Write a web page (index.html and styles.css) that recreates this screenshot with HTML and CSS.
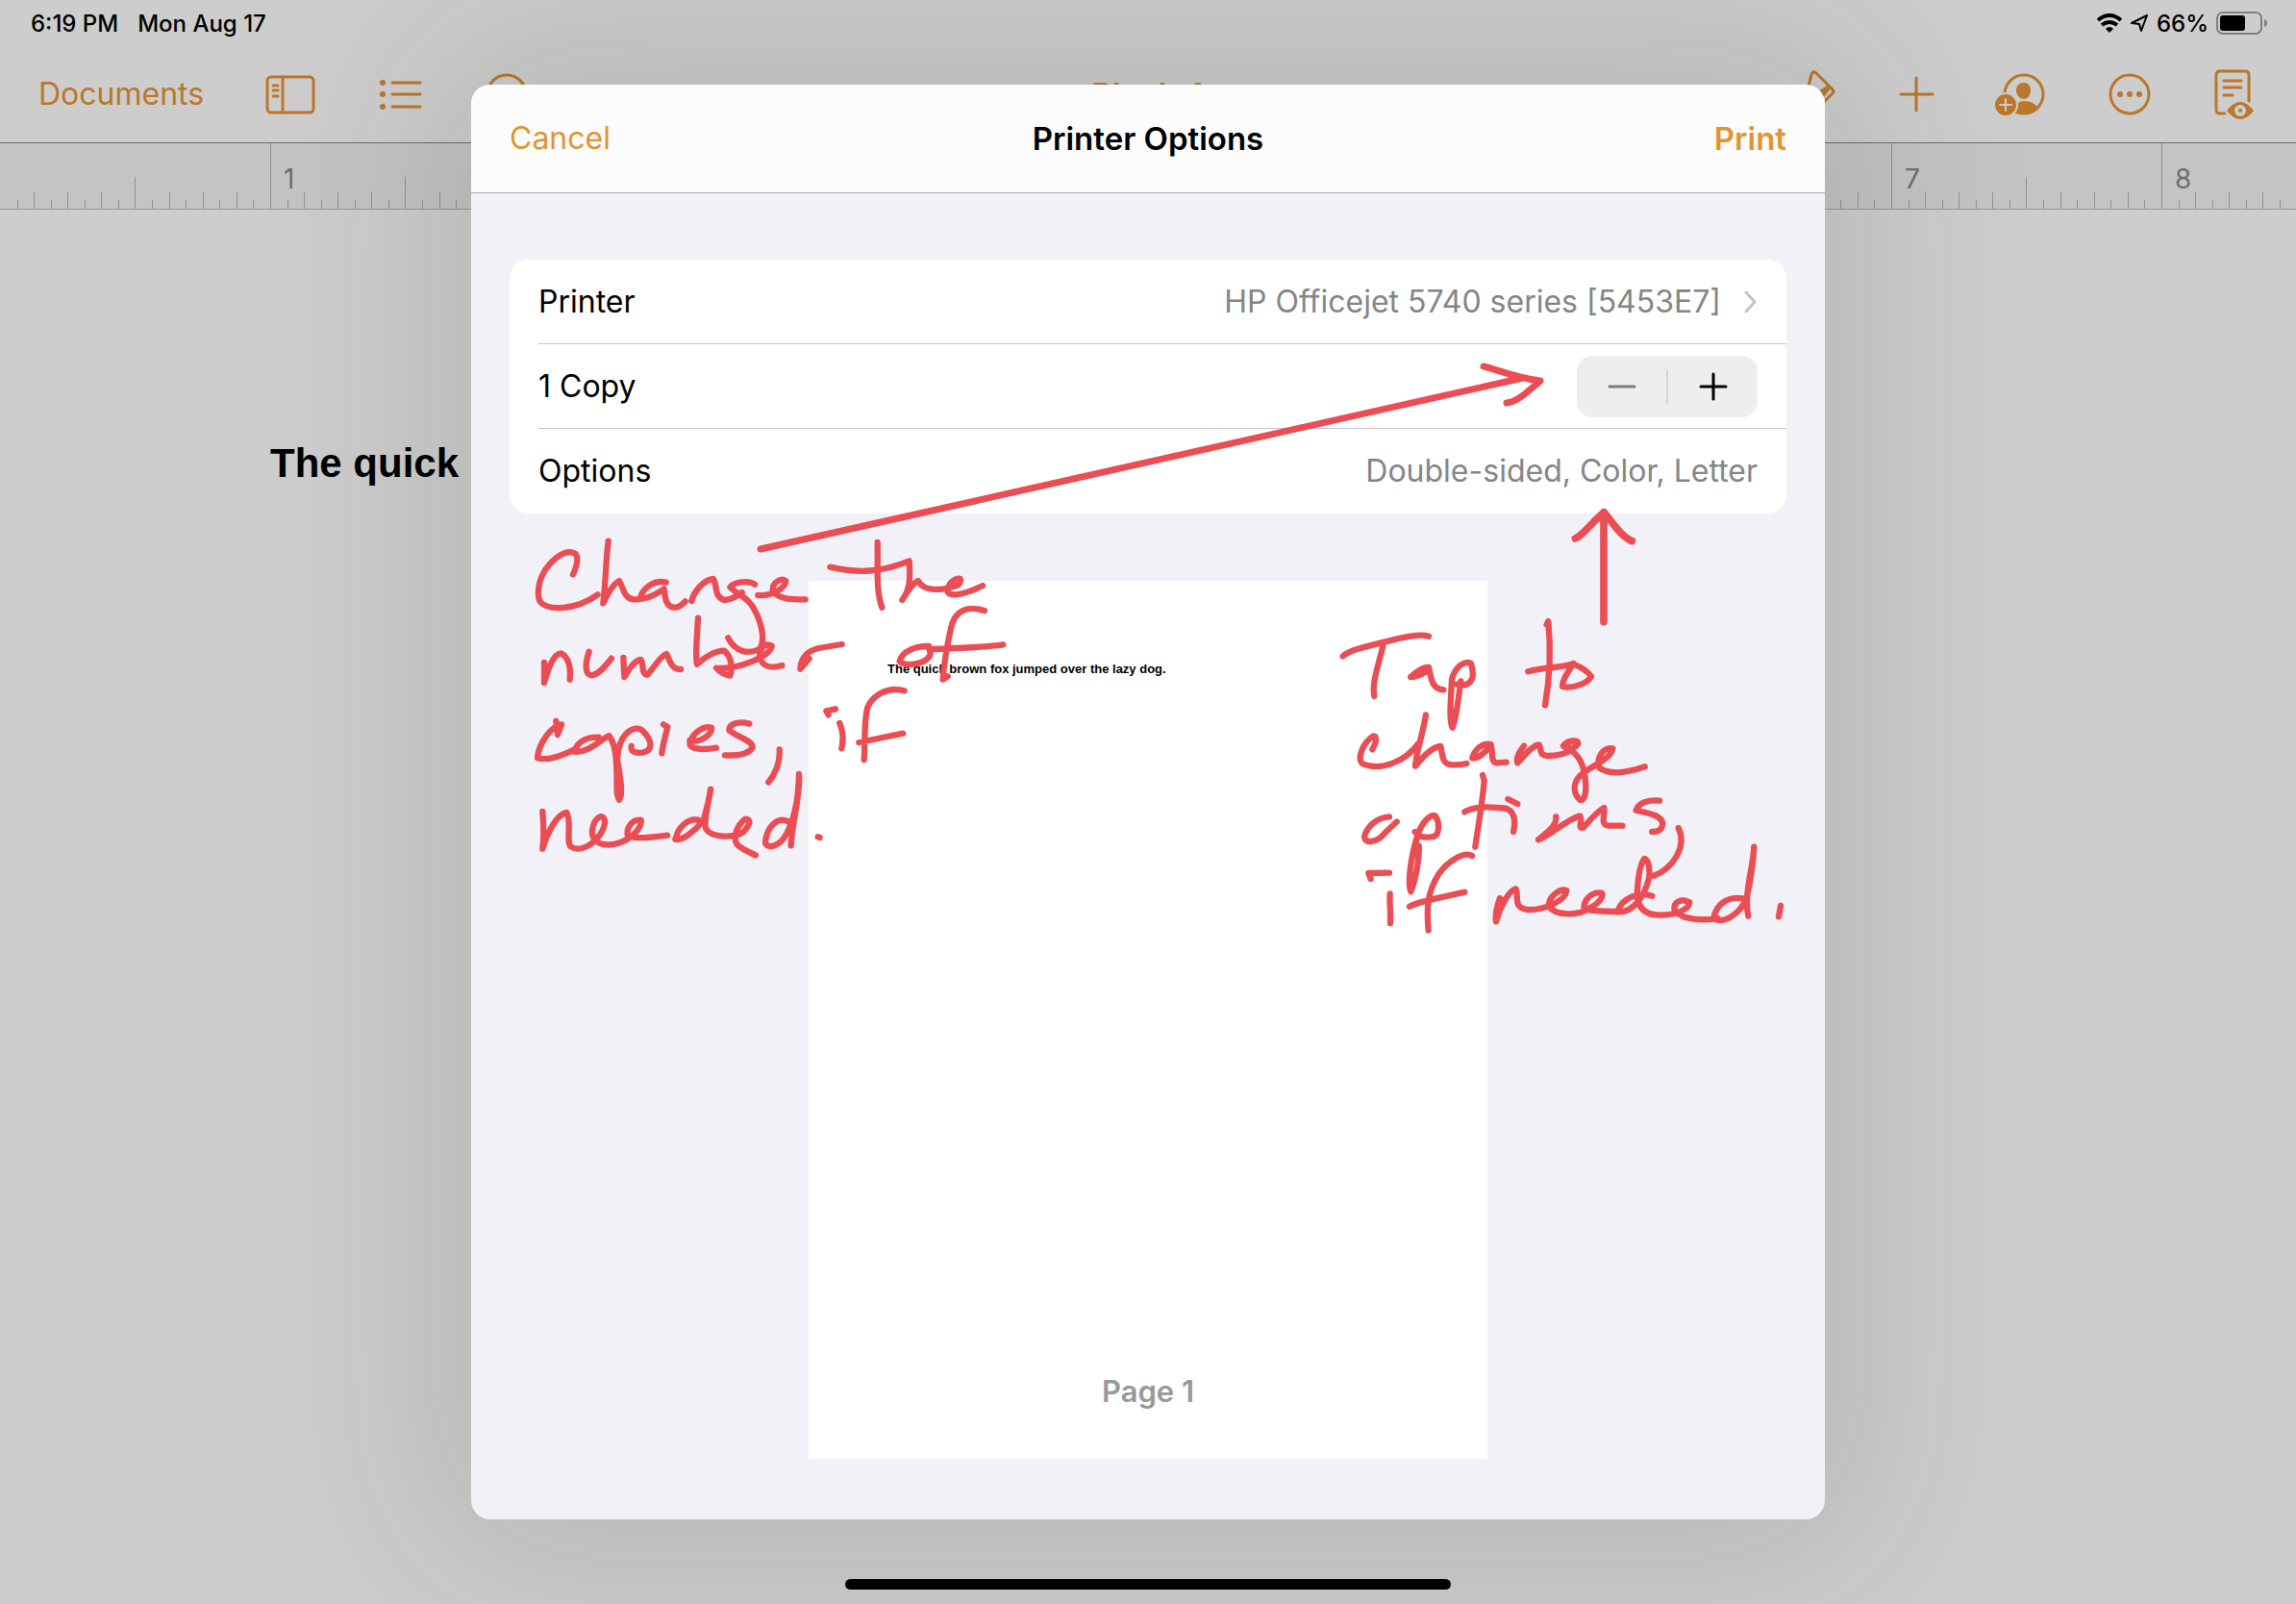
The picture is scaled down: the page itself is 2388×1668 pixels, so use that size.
FILE: index.html
```html
<!DOCTYPE html>
<html lang="en">
<head>
<meta charset="utf-8">
<meta name="viewport" content="width=device-width, initial-scale=1">
<title>Printer Options</title>
<link rel="stylesheet" href="styles.css">
</head>
<body>
<div class="screen">
  <header class="status">
    <div class="status-group status-left"><span>6:19 PM</span><span>Mon Aug 17</span></div>
    <div class="status-group">
      <svg class="wifi" viewBox="2182 14 28 20" aria-hidden="true"><path class="ink-line" d="M2184 21Q2196 11 2208 21M2188 26Q2196 20 2204 26"/><path class="ink" d="M2196 34l-4-4q4-4 8 0z"/></svg>
      <svg class="locate" viewBox="2219 15 19 20" aria-hidden="true"><path d="M2236 17L2220 25L2228 26L2230 33Z"/></svg>
      <span class="charge">66%</span>
      <svg class="battery" viewBox="2305 12 54 24" aria-hidden="true"><rect class="battery-case" x="2306" y="13" width="46" height="22" rx="6"/><rect class="ink" x="2309" y="16" width="26" height="16" rx="3"/><path class="battery-tip" d="M2355 20q3 1 3 4t-3 4z"/></svg>
    </div>
  </header>

  <nav class="toolbar" aria-label="Document">
    <div class="tools tools-left">
      <button class="text-button documents" type="button">Documents</button>
      <button class="icon-button" type="button" aria-label="View options">
        <svg class="icon" viewBox="277 73 50 50"><rect x="278" y="80" width="48" height="37" rx="4"/><path d="M294 80v37M284 89h5M284 94h5M284 100h5"/></svg>
      </button>
      <button class="icon-button" type="button" aria-label="Lists">
        <svg class="icon" viewBox="391 73 50 50"><path d="M408 86h29M408 98h29M408 111h29"/><g class="solid"><circle cx="398" cy="86" r="3"/><circle cx="398" cy="98" r="3"/><circle cx="398" cy="111" r="3"/></g></svg>
      </button>
      <button class="icon-button" type="button" aria-label="Undo">
        <svg class="icon icon-narrow" viewBox="505 73 44 50"><circle cx="527" cy="98" r="20"/><path d="M524 89l-7 7 7 7M517 96h13q7 0 7 7t-7 7h-5"/></svg>
      </button>
    </div>
    <h1 class="doc-title">Blank 4</h1>
    <div class="tools tools-right">
      <button class="icon-button" type="button" aria-label="Format">
        <svg class="icon" viewBox="1859 73 50 50"><path d="M1881 89l3-11q1-5 5-2l17 17q2 2 0 4l-11 11M1903 91l-9 11"/><path class="solid" d="M1902 88l-11 7 4 7 3-6z"/></svg>
      </button>
      <button class="icon-button" type="button" aria-label="Insert">
        <svg class="icon" viewBox="1969 73 50 50"><path d="M1977 98h33M1993 81v34"/></svg>
      </button>
      <button class="icon-button" type="button" aria-label="Collaborate">
        <svg class="icon" viewBox="2079 73 50 50"><circle cx="2105" cy="98" r="20"/><path class="solid" d="M2105 86c-5 0-8 3-8 8s4 9 8 9 7-4 7-9-3-8-7-8zM2094 114q4-9 11-9 9 0 14 6-9 12-25 6z"/><circle class="badge" cx="2086" cy="109" r="12"/><path class="cutout" d="M2080 109h12M2086 103v12"/></svg>
      </button>
      <button class="icon-button" type="button" aria-label="More">
        <svg class="icon" viewBox="2189 73 50 50"><circle cx="2215" cy="98" r="20"/><g class="solid"><circle cx="2205" cy="98" r="3"/><circle cx="2215" cy="98" r="3"/><circle cx="2225" cy="98" r="3"/></g></svg>
      </button>
      <button class="icon-button" type="button" aria-label="Reading view">
        <svg class="icon" viewBox="2299 73 50 50"><path d="M2339 105V78q0-4-4-4h-26q-4 0-4 4v36q0 4 4 4h5M2313 84h18M2313 91h18M2313 99h9"/><path class="solid" d="M2316 115q14-18 28 0-14 18-28 0z"/><circle class="cutout-fill" cx="2330" cy="115" r="6"/><circle class="solid" cx="2330" cy="115" r="2"/></svg>
      </button>
    </div>
  </nav>

  <div class="ruler" aria-hidden="true">
    <svg class="ticks">
      <defs><pattern id="inch" width="281" height="68" patternUnits="userSpaceOnUse"><path d="M0 0h1v68h-1zM18 59h1v9h-1zM35 51h1v17h-1zM53 59h1v9h-1zM70 51h1v17h-1zM88 59h1v9h-1zM105 51h1v17h-1zM123 59h1v9h-1zM140 35h1v33h-1zM158 59h1v9h-1zM176 51h1v17h-1zM193 59h1v9h-1zM211 51h1v17h-1zM228 59h1v9h-1zM246 51h1v17h-1zM263 59h1v9h-1z"/></pattern></defs>
      <rect x="1" width="100%" height="68" fill="url(#inch)"/>
    </svg>
    <div class="ruler-numbers"><span></span><span>1</span><span></span><span></span><span></span><span></span><span></span><span>7</span><span>8</span></div>
  </div>

  <main class="document"><p class="headline">The quick</p></main>

  <div class="overlay">
    <section class="dialog" role="dialog" aria-labelledby="dialog-title">
      <header class="dialog-bar">
        <button class="text-button" type="button">Cancel</button>
        <h2 class="dialog-title" id="dialog-title">Printer Options</h2>
        <button class="text-button confirm" type="button">Print</button>
      </header>
      <div class="dialog-body">
        <div class="settings">
          <button class="row" type="button">
            <span>Printer</span>
            <span class="value">HP Officejet 5740 series [5453E7]<svg class="chevron" viewBox="0 0 14 26" aria-hidden="true"><path d="M2 3l9 10-9 10"/></svg></span>
          </button>
          <div class="row">
            <span>1 Copy</span>
            <div class="stepper" role="group" aria-label="Copies">
              <button class="step" type="button" aria-label="Fewer copies" disabled><svg class="step-icon" viewBox="0 0 30 30"><path d="M2 15h26"/></svg></button>
              <button class="step" type="button" aria-label="More copies"><svg class="step-icon" viewBox="0 0 30 30"><path d="M2 15h26M15 2v26"/></svg></button>
            </div>
          </div>
          <button class="row" type="button">
            <span>Options</span>
            <span class="value">Double-sided, Color, Letter</span>
          </button>
        </div>
        <div class="sheet">
          <p class="sheet-text">The quick brown fox jumped over the lazy dog.</p>
          <p class="sheet-label">Page 1</p>
        </div>
      </div>

      <svg class="notes" viewBox="490 88 1408 1492" role="img" aria-label="Change the number of copies, if needed. Tap to change options, if needed.">
        <g class="arrow-pen"><path d="M791 571L1584 393M1543 381C1556 384 1577 393 1602 396C1588 408 1578 418 1567 419"/></g>
        <g class="pen" transform="translate(540 540) scale(.33333)">
          <path d="M168 172C182 140 186 118 175 107C150 92 110 115 80 160C58 195 55 240 66 258C90 285 175 285 245 235"/>
          <path d="M278 68C270 130 270 200 262 262C275 235 295 200 312 192C325 210 325 250 360 250C400 250 425 235 452 217C455 250 460 275 485 275C500 275 510 265 518 256M458 197C420 188 385 215 378 245"/>
          <path d="M538 255C545 225 575 190 605 186C620 205 605 240 640 252C665 250 680 240 695 228M735 203C715 190 670 195 658 212C680 235 720 245 738 290C758 330 768 380 750 405C715 422 675 415 652 370"/>
          <path d="M745 237C790 240 830 215 832 192C810 180 785 205 793 225C810 250 850 250 893 250"/>
          <path d="M970 149C1060 170 1130 165 1217 130C1220 180 1222 215 1195 252C1215 220 1235 195 1245 192C1260 225 1320 225 1370 205C1390 180 1365 178 1345 200C1330 225 1335 235 1360 235C1395 232 1420 220 1446 207M1118 72C1120 150 1112 220 1132 275"/>
          <path d="M78 447L78 510C90 470 105 420 130 418C155 430 162 465 158 500M218 413C205 450 205 485 225 487C250 485 275 450 288 434M325 432L328 492C345 465 360 440 380 438C390 455 380 485 400 485C420 465 440 425 460 420C470 440 475 470 504 468"/>
          <path d="M558 308C555 370 548 430 555 452C580 430 610 410 640 410C665 430 665 470 658 488C640 485 625 475 615 464C690 470 785 425 788 395C765 380 745 410 752 435C765 465 790 465 820 456M905 435L877 467C880 430 900 410 935 402L1007 390"/>
          <path d="M1278 396C1240 395 1195 410 1187 443C1200 460 1265 455 1282 425C1285 405 1275 398 1270 396M1452 285C1400 270 1360 280 1347 340C1335 395 1325 450 1322 500L1337 490M1290 405C1360 402 1450 400 1510 391"/>
          <path d="M115 630L120 672L132 640C100 645 60 700 57 745C90 755 140 735 180 715M248 680C210 678 180 695 172 725C215 730 250 690 280 675C300 700 303 740 304 780C306 840 302 860 312 875C325 860 315 800 306 750C310 660 365 640 385 660C415 690 420 720 385 728C360 730 348 725 350 708M312 800L312 870"/>
          <path d="M450 640L463 648C455 680 448 705 445 730M532 690C570 700 605 665 600 650C570 640 530 680 533 705C545 720 585 718 615 713M718 638C690 630 655 635 655 658C680 680 730 690 728 712C715 735 680 738 642 736M812 718C815 755 800 795 778 820"/>
          <path d="M987 592L958 598L965 610M1000 636C1010 660 1012 690 1006 715M1202 535C1150 520 1100 550 1086 590C1075 640 1080 700 1076 750M1060 696L1198 668"/>
          <path d="M73 912C76 950 78 990 73 1028C85 985 115 920 148 915C165 940 145 1010 162 1022C200 1045 260 995 268 945C265 915 235 925 228 970C225 1015 270 1022 310 1010C345 1000 385 965 380 938C350 935 335 965 338 985C360 1000 410 992 462 986"/>
          <path d="M570 945C545 925 500 945 487 998C510 1005 550 970 575 940C585 900 595 870 597 842C590 890 575 940 582 965C600 995 670 995 700 975C722 950 725 935 705 935C680 955 665 990 680 1015C695 1030 720 1040 738 1048M838 942C800 925 770 970 768 1010C775 1030 815 1020 835 980C860 930 872 870 873 795C878 860 852 940 848 1018M932 991L938 993"/>
        </g>
        <g class="pen" transform="translate(1380 510) scale(.33333)">
          <path class="heavy" d="M864 410L864 68M775 150C800 140 830 95 865 68C890 100 920 145 952 158"/>
          <path d="M50 517C70 500 110 490 170 475C230 460 290 445 318 455M175 485C160 550 140 600 148 642M262 582C285 560 305 550 318 552C325 580 325 620 364 622M262 582C285 582 310 565 320 560M418 595C410 650 405 710 392 740C380 720 388 640 390 590C400 550 430 530 450 540C462 580 455 600 430 607L405 605"/>
          <path d="M686 418L691 408C700 500 695 590 681 670M628 565C680 550 730 555 770 540C750 570 735 590 735 612C770 620 815 600 825 580C810 560 790 550 770 542"/>
          <path d="M142 808C158 780 155 765 145 766C110 790 95 835 110 852C170 880 250 840 285 790M309 700C300 760 280 810 276 860C300 830 330 800 355 798C362 830 360 855 390 856C410 857 425 855 436 852M512 792C485 785 460 810 454 835C475 838 495 815 512 795C520 820 510 848 530 850L560 848M615 797C600 815 590 835 595 850C615 830 640 795 662 793C672 810 660 825 690 828C720 828 750 818 765 810"/>
          <path d="M738 797C750 780 785 775 784 790C775 808 745 805 738 797C790 820 805 860 808 920C810 960 795 970 790 965C765 945 770 910 790 890C830 855 885 840 892 805C865 800 840 830 850 865C885 890 940 880 992 862"/>
          <path d="M195 1018C155 1020 125 1050 117 1080C120 1105 150 1095 165 1085C185 1065 205 1045 218 1034M287 1108C290 1150 275 1220 262 1252C250 1220 265 1130 285 1070C300 1030 325 1010 338 1015C355 1040 350 1080 330 1080C305 1085 285 1080 275 1065M486 888L491 905C485 980 470 1060 463 1112M430 1003C470 980 530 990 560 992C590 1005 588 1040 582 1065M565 963L595 978"/>
          <path d="M715 1018C718 1050 680 1070 660 1090C700 1075 750 1025 790 1015C800 1035 780 1055 800 1052C820 1030 845 1000 865 990C870 1010 850 1045 880 1046L922 1046M1038 968C1010 965 975 970 965 998C990 1005 1045 1010 1048 1040C1045 1060 1035 1065 1015 1065M1097 1053C1125 1110 1080 1180 1020 1202"/>
          <path d="M195 1193L130 1194L137 1212M197 1258C195 1290 200 1320 198 1350M453 1140C430 1125 380 1155 350 1195C315 1250 310 1300 317 1372M258 1298C290 1280 360 1270 430 1253"/>
          <path d="M540 1272C530 1300 525 1325 528 1345C540 1300 570 1245 590 1243C600 1270 580 1300 625 1308C680 1310 745 1280 748 1248C725 1240 690 1270 693 1298C715 1330 790 1325 815 1305C850 1290 865 1265 858 1256C825 1250 800 1280 803 1305C830 1315 880 1312 912 1315C955 1315 990 1270 1005 1210C1012 1160 992 1145 990 1150C975 1170 970 1220 968 1260C970 1300 990 1325 1040 1325C1085 1325 1130 1310 1132 1285C1105 1270 1080 1285 1085 1310C1110 1345 1190 1340 1220 1335M1015 1265C970 1250 920 1275 908 1312M1298 1273C1250 1265 1215 1290 1207 1335C1240 1355 1290 1320 1310 1270C1325 1210 1330 1160 1333 1112C1330 1180 1300 1260 1315 1328M1416 1295L1410 1330"/>
        </g>
      </svg>
    </section>
  </div>
  <div class="home-indicator"></div>
</div>
</body>
</html>
```

FILE: styles.css
```css
:root {
  --tint: #e29430;
  --tint-dim: #bb772a;
  --backdrop: #cdcdcd;
}
* { box-sizing: border-box; }
body {
  margin: 0;
  background: var(--backdrop);
  color: #000;
  font-family: Inter, "Noto Sans", sans-serif;
}
h1, h2, p { margin: 0; }
button {
  border: 0;
  padding: 0;
  background: none;
  color: inherit;
  font: inherit;
}
svg { display: block; }

.screen {
  position: relative;
  display: flex;
  flex-direction: column;
  min-height: 100vh;
  overflow: hidden;
}

/* Status bar */
.status {
  display: flex;
  justify-content: space-between;
  align-items: center;
  height: 48px;
  padding: 0 29px 0 32px;
  font-size: 24px;
  font-weight: 500;
}
.status-group { display: flex; align-items: center; gap: 8px; }
.status-left { gap: 20px; }
.wifi { width: 28px; height: 20px; }
.locate { width: 19px; height: 20px; fill: none; stroke: #000; stroke-width: 2; stroke-linejoin: round; }
.battery { width: 54px; height: 24px; }
.ink { fill: #000; }
.ink-line { fill: none; stroke: #000; stroke-width: 4; }
.battery-case { fill: none; stroke: #808080; stroke-width: 2; }
.battery-tip { fill: #808080; }

/* Toolbar */
.toolbar {
  display: grid;
  grid-template-columns: 1fr auto 1fr;
  align-items: center;
  height: 101px;
  padding: 0 39px 0 40px;
  border-bottom: 1px solid #6b6b6b;
  color: var(--tint-dim);
}
.tools { display: flex; align-items: center; }
.tools-left { gap: 64px; }
.tools-right { gap: 60px; justify-content: flex-end; }
.text-button { font-size: 32px; line-height: 40px; }
.documents { width: 173px; text-align: left; white-space: nowrap; }
.doc-title { font-size: 33px; line-height: 40px; font-weight: 600; }
.icon {
  width: 50px;
  height: 50px;
  overflow: visible;
  fill: none;
  stroke: currentColor;
  stroke-width: 3;
  stroke-linecap: round;
  stroke-linejoin: round;
}
.icon-narrow { width: 44px; }
.icon .solid { fill: currentColor; stroke: none; }
.icon .badge { fill: currentColor; stroke: var(--backdrop); stroke-width: 2; }
.icon .cutout { stroke: var(--backdrop); stroke-width: 2; }
.icon .cutout-fill { fill: var(--backdrop); stroke: none; }

/* Ruler */
.ruler {
  display: grid;
  height: 69px;
  overflow: hidden;
  background: #c4c4c4;
  border-bottom: 1px solid #999;
}
.ticks, .ruler-numbers { grid-area: 1 / 1; }
.ticks { width: 100%; height: 68px; fill: #929292; }
.ruler-numbers { display: flex; color: #6e6e6e; font-size: 28px; line-height: 34px; padding-top: 20px; }
.ruler-numbers span { flex: 0 0 281px; padding-left: 14px; }

/* Document */
.document { flex: 1; padding: 240px 281px 0; }
.headline { font: bold 42px/48px "Liberation Sans", Arial, sans-serif; }

/* Dialog */
.overlay {
  position: absolute;
  inset: 0;
  display: flex;
  justify-content: center;
  padding: 88px 24px;
}
.dialog {
  position: relative;
  display: flex;
  flex-direction: column;
  width: 100%;
  max-width: 1408px;
  border-radius: 20px;
  background: #f2f1f7;
  box-shadow: 0 0 190px 40px rgba(12, 36, 16, 0.13);
}
.dialog-bar {
  display: grid;
  grid-template-columns: 1fr auto 1fr;
  align-items: center;
  height: 113px;
  padding: 0 40px;
  border-bottom: 1px solid #a9a9ad;
  border-radius: 20px 20px 0 0;
  background: #fcfcfc;
}
.dialog-bar .text-button { color: var(--tint); justify-self: start; }
.dialog-bar .confirm { justify-self: end; font-size: 33px; font-weight: 600; }
.dialog-title { font-size: 33px; line-height: 40px; font-weight: 600; }
.dialog-body {
  flex: 1;
  display: flex;
  flex-direction: column;
  align-items: center;
  gap: 70px;
  padding: 69px 40px 63px;
}
.settings {
  width: 100%;
  padding-left: 30px;
  border-radius: 20px;
  background: #fff;
}
.row {
  display: flex;
  justify-content: space-between;
  align-items: center;
  width: 100%;
  height: 88px;
  padding-right: 30px;
  font-size: 32px;
  line-height: 40px;
  text-align: left;
}
.row:not(:last-child) { border-bottom: 1px solid #c6c6c8; }
.value { display: flex; align-items: center; gap: 24px; color: #858587; }
.chevron { width: 14px; height: 26px; fill: none; stroke: #c4c4c7; stroke-width: 3; stroke-linecap: round; stroke-linejoin: round; }
.stepper {
  display: flex;
  align-items: center;
  width: 188px;
  height: 64px;
  border-radius: 16px;
  background: #eee;
}
.step { flex: 1; display: flex; justify-content: center; align-items: center; height: 36px; }
.step + .step { border-left: 2px solid #d4d4d6; }
.step-icon { width: 30px; height: 30px; stroke: #000; stroke-width: 3; stroke-linecap: round; }
.step:disabled .step-icon { stroke: #7c7c7c; }

.sheet {
  flex: 1;
  display: flex;
  flex-direction: column;
  justify-content: space-between;
  width: 100%;
  max-width: 706px;
  padding: 84px 82px 50px;
  background: #fff;
}
.sheet-text { font: bold 13px/16px "Liberation Sans", Arial, sans-serif; white-space: nowrap; }
.sheet-label { color: #999; font-size: 31px; line-height: 40px; font-weight: 600; text-align: center; }

/* Hand-drawn notes over the dialog */
.notes {
  position: absolute;
  inset: 0;
  width: 100%;
  height: 100%;
  overflow: visible;
  pointer-events: none;
}
.arrow-pen, .pen { fill: none; stroke: #ea4e54; stroke-linecap: round; stroke-linejoin: round; }
.arrow-pen { stroke-width: 7; }
.pen { stroke-width: 19; }
.pen .heavy { stroke-width: 23; }

.home-indicator {
  position: absolute;
  bottom: 15px;
  left: 50%;
  width: 630px;
  height: 11px;
  margin-left: -315px;
  border-radius: 6px;
  background: #000;
}
```
